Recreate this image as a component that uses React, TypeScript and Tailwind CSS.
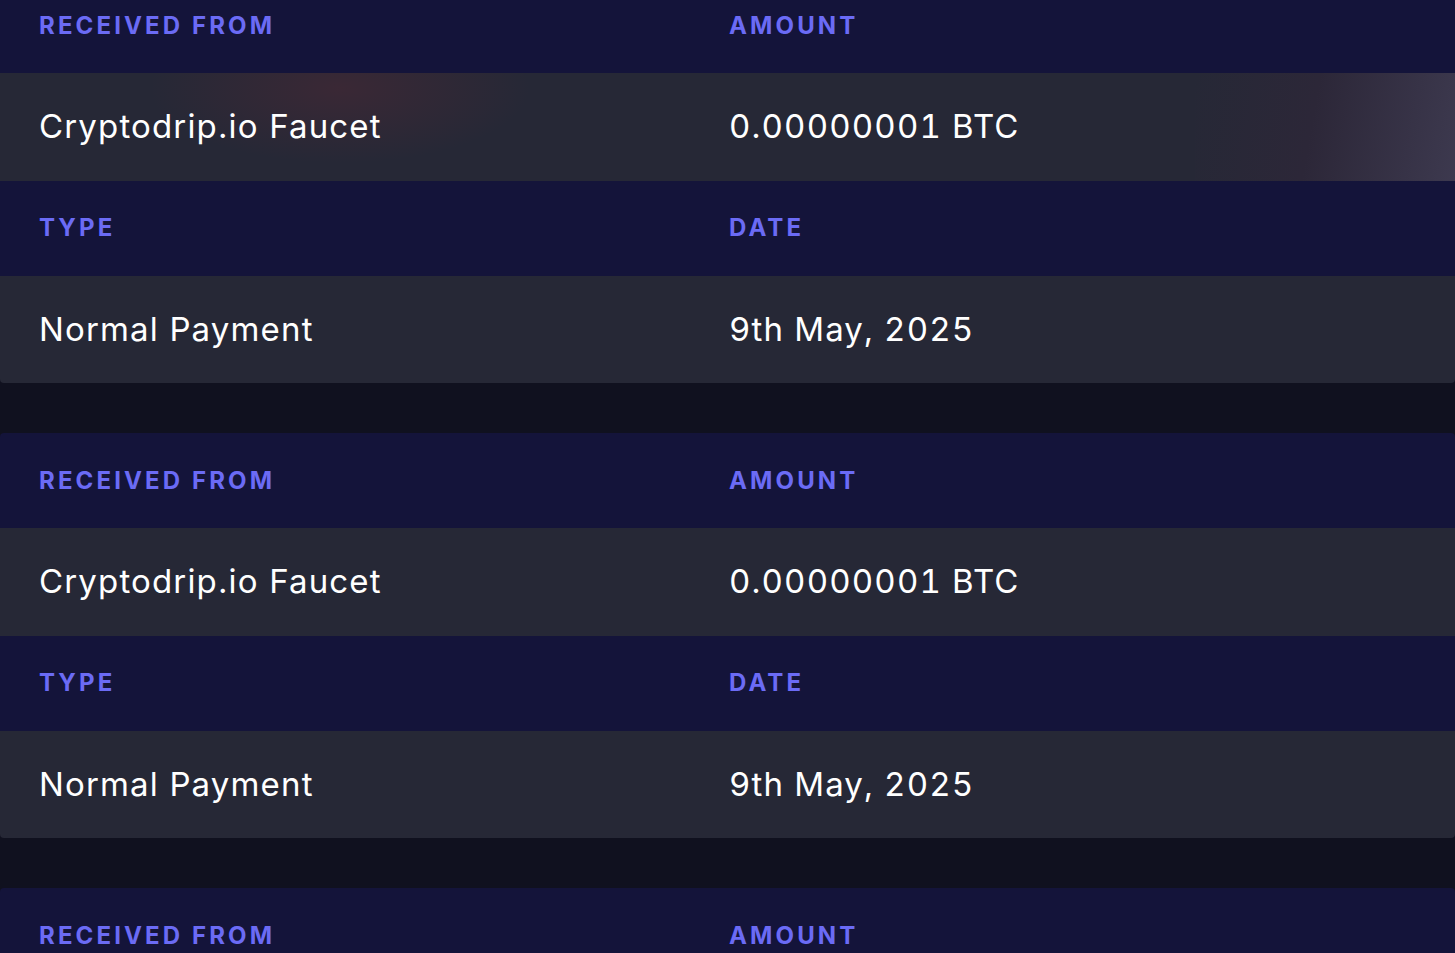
type Item = { from: string; amount: string; type: string; date: string }

const items: Item[] = [
  { from: 'Cryptodrip.io Faucet', amount: '0.00000001 BTC', type: 'Normal Payment', date: '9th May, 2025' },
  { from: 'Cryptodrip.io Faucet', amount: '0.00000001 BTC', type: 'Normal Payment', date: '9th May, 2025' },
  { from: 'Cryptodrip.io Faucet', amount: '0.00000001 BTC', type: 'Normal Payment', date: '9th May, 2025' },
]

function LabelRow({ a, b }: { a: string; b: string }) {
  return (
    <div className="grid grid-cols-[690px_1fr] items-center h-[95px] pl-[39px] bg-[#14143a] text-[#6b6bf5] text-[24px] font-bold tracking-[0.13em] uppercase">
      <div>{a}</div>
      <div>{b}</div>
    </div>
  )
}

function ValueRow({ a, b, glow }: { a: string; b: string; glow?: boolean }) {
  return (
    <div className="relative grid grid-cols-[690px_1fr] items-center h-[107.5px] pl-[39px] bg-[#262836] text-white text-[33px] tracking-[0.035em] overflow-hidden">
      {glow && (
        <>
          <div className="absolute left-[150px] -top-[60px] w-[380px] h-[150px] rounded-full bg-[radial-gradient(closest-side,rgba(110,40,50,0.28),transparent)] pointer-events-none" />
          <div className="absolute right-0 inset-y-0 w-[260px] bg-[linear-gradient(100deg,transparent_0%,rgba(50,38,58,0.5)_45%,rgba(62,58,80,0.95)_100%)] pointer-events-none" />
        </>
      )}
      <div className="relative">{a}</div>
      <div className="relative tabular-nums">{b}</div>
    </div>
  )
}

export default function App() {
  return (
    <div className="h-[953px] overflow-hidden bg-[#10111f]" style={{ fontFamily: 'Inter, "Noto Sans", sans-serif' }}>
      <div className="-mt-[22px] flex flex-col gap-[50px]">
        {items.map((it, i) => (
          <div key={i} className="rounded-[4px] overflow-hidden">
            <LabelRow a="Received From" b="Amount" />
            <ValueRow a={it.from} b={it.amount} glow={i === 0} />
            <LabelRow a="Type" b="Date" />
            <ValueRow a={it.type} b={it.date} />
          </div>
        ))}
      </div>
    </div>
  )
}
